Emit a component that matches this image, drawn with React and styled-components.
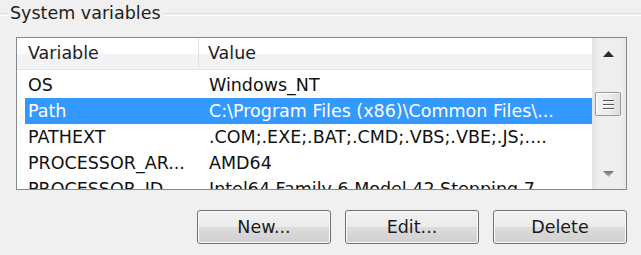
import styled, { createGlobalStyle } from "styled-components";

const rows = [
  { name: "OS", value: "Windows_NT" },
  { name: "Path", value: "C:\\Program Files (x86)\\Common Files\\...", selected: true },
  { name: "PATHEXT", value: ".COM;.EXE;.BAT;.CMD;.VBS;.VBE;.JS;...." },
  { name: "PROCESSOR_AR...", value: "AMD64" },
  { name: "PROCESSOR_ID...", value: "Intel64 Family 6 Model 42 Stepping 7, ..." },
];

export default function App() {
  return (
    <>
      <GlobalStyle />
      <Page>
        <GroupTitle>
          <LineStub />
          <TitleText>System variables</TitleText>
          <Line />
        </GroupTitle>

        <ListBox>
          <ListArea>
            <HeaderRow>
              <HeaderCell>Variable</HeaderCell>
              <HeaderCell $last>Value</HeaderCell>
            </HeaderRow>
            <Rows>
              {rows.map((r) => (
                <Row key={r.name} $selected={r.selected}>
                  <NameCell>{r.name}</NameCell>
                  <ValueCell>{r.value}</ValueCell>
                </Row>
              ))}
            </Rows>
          </ListArea>

          <ScrollBar>
            <ArrowButton>
              <svg width="11" height="6" viewBox="0 0 11 6">
                <path d="M5.5 0 L11 6 L0 6 Z" fill="#2b2b2b" />
              </svg>
            </ArrowButton>
            <Track>
              <Thumb>
                <Grip />
                <Grip />
                <Grip />
              </Thumb>
            </Track>
            <ArrowButton>
              <svg width="11" height="6" viewBox="0 0 11 6">
                <defs>
                  <linearGradient id="dg" x1="0" y1="0" x2="0" y2="1">
                    <stop offset="0" stopColor="#6e6e6e" />
                    <stop offset="1" stopColor="#b8b8b8" />
                  </linearGradient>
                </defs>
                <path d="M0 0 L11 0 L5.5 6 Z" fill="url(#dg)" />
              </svg>
            </ArrowButton>
          </ScrollBar>
        </ListBox>

        <ButtonRow>
          <Button>New...</Button>
          <Button>Edit...</Button>
          <Button>Delete</Button>
        </ButtonRow>
      </Page>
    </>
  );
}

const GlobalStyle = createGlobalStyle`
  body {
    margin: 0;
    background: #f0f0f0;
    font-family: "DejaVu Sans", Verdana, sans-serif;
    font-size: 17.5px;
    color: #111;
  }
`;

const Page = styled.div`
  width: 641px;
  height: 255px;
  overflow: hidden;
  display: flex;
  flex-direction: column;
`;

const GroupTitle = styled.div`
  display: flex;
  align-items: center;
  height: 27px;
`;

const LineStub = styled.div`
  width: 8px;
  height: 1px;
  border-top: 1px solid #d5dfe5;
  border-bottom: 1px solid #ffffff;
  margin-top: 1px;
`;

const Line = styled(LineStub)`
  width: auto;
  flex: 1;
`;

const TitleText = styled.span`
  padding: 0 3px 0 2px;
  line-height: 27px;
  color: #1e1e1e;
`;

const ListBox = styled.div`
  margin: 10px 14px 0 16px;
  height: 151px;
  border: 1px solid #828790;
  background: #ffffff;
  display: grid;
  grid-template-columns: 1fr 34px;
  overflow: hidden;
`;

const ListArea = styled.div`
  display: flex;
  flex-direction: column;
  overflow: hidden;
`;

const HeaderRow = styled.div`
  display: grid;
  grid-template-columns: 182px 1fr;
  height: 31px;
  border-bottom: 1px solid #e5e5e5;
  background: linear-gradient(#ffffff 0%, #ffffff 50%, #f2f3f5 50%, #f2f3f5 100%);
`;

const HeaderCell = styled.div`
  padding-left: ${(p) => (p.$last ? "9px" : "11px")};
  line-height: 31px;
  border-right: ${(p) => (p.$last ? "none" : "1px solid #e3e3e3")};
  color: #1e1e1e;
`;

const Rows = styled.div`
  padding: 2px 0 0 8px;
  display: flex;
  flex-direction: column;
`;

const Row = styled.div`
  display: grid;
  grid-template-columns: 174px 1fr;
  height: 26px;
  line-height: 27px;
  background: ${(p) => (p.$selected ? "#3399ff" : "transparent")};
  color: ${(p) => (p.$selected ? "#ffffff" : "#111111")};
  white-space: nowrap;
`;

const NameCell = styled.div`
  padding-left: 3px;
  overflow: visible;
`;

const ValueCell = styled.div`
  padding-left: 10px;
  overflow: hidden;
`;

const ScrollBar = styled.div`
  display: flex;
  flex-direction: column;
  background: linear-gradient(90deg, #e3e3e3 0%, #eeeeee 15%, #eeeeee 85%, #e6e6e6 100%);
  border-left: 1px solid #e8e8e8;
`;

const ArrowButton = styled.div`
  height: 31px;
  display: flex;
  align-items: center;
  justify-content: center;
  padding-right: 2px;
`;

const Track = styled.div`
  flex: 1;
  padding: 23px 0 0 2px;
`;

const Thumb = styled.div`
  width: 26px;
  height: 24px;
  box-sizing: border-box;
  border: 1px solid #9a9a9a;
  border-radius: 2px;
  background: linear-gradient(90deg, #f4f4f4 0%, #ececec 50%, #dcdcdc 100%);
  box-shadow: inset 1px 1px 0 #ffffff;
  display: flex;
  flex-direction: column;
  align-items: center;
  justify-content: center;
  gap: 3px;
`;

const Grip = styled.div`
  width: 11px;
  height: 1px;
  background: #555;
  box-shadow: 0 1px 0 #ffffff;
`;

const ButtonRow = styled.div`
  display: flex;
  justify-content: flex-end;
  gap: 14px;
  margin: 20px 14px 0 0;
`;

const Button = styled.button`
  width: 134px;
  height: 34px;
  border: 1px solid #707070;
  border-radius: 3px;
  background: linear-gradient(#f2f2f2 0%, #ebebeb 50%, #dddddd 50%, #cfcfcf 100%);
  box-shadow: inset 0 0 0 1px #fcfcfc;
  font-family: "DejaVu Sans", Verdana, sans-serif;
  font-size: 17.5px;
  color: #1a1a1a;
  padding: 0;
`;
